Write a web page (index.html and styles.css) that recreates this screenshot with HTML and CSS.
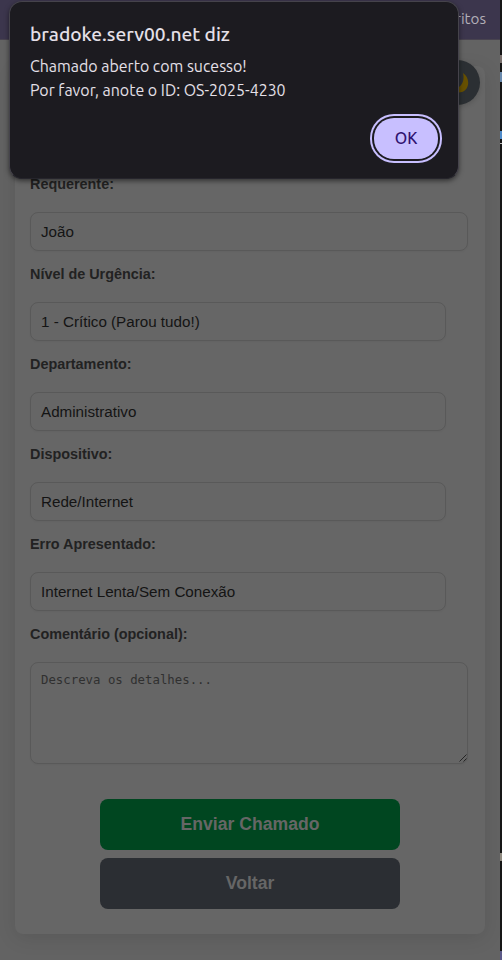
FILE: index.html
```html
<!DOCTYPE html>
<html lang="pt-BR">
<head>
<meta charset="utf-8">
<title>Abrir Chamado</title>
<link rel="stylesheet" href="styles.css">
</head>
<body>
<div class="window">
  <header class="bookmarks"><span class="bookmark">ritos</span></header>
  <main class="page">
    <form class="card">
      <label class="label">Requerente:</label>
      <div class="field wide">João</div>
      <label class="label">Nível de Urgência:</label>
      <div class="field">1 - Crítico (Parou tudo!)</div>
      <label class="label">Departamento:</label>
      <div class="field">Administrativo</div>
      <label class="label">Dispositivo:</label>
      <div class="field">Rede/Internet</div>
      <label class="label">Erro Apresentado:</label>
      <div class="field">Internet Lenta/Sem Conexão</div>
      <label class="label">Comentário (opcional):</label>
      <div class="comment">Descreva os detalhes...
        <svg class="grip" width="8" height="8" viewBox="0 0 8 8"><path d="M0.5 7.5L7.5 0.5M4.5 7.5L7.5 4.5"/></svg>
      </div>
      <div class="actions">
        <button type="button" class="button send">Enviar Chamado</button>
        <button type="button" class="button back">Voltar</button>
      </div>
    </form>
  </main>
  <div class="theme">
    <svg width="20" height="20" viewBox="0 0 20 20"><path d="M14 0C22 5 21 19.500 9.500 19.500C5 19.500 2 17.500 1 14.500C10 18 16.500 10 14 0Z"/></svg>
  </div>
  <section class="dialog">
    <h1 class="title">bradoke.serv00.net diz</h1>
    <p class="message">Chamado aberto com sucesso!<br>Por favor, anote o ID: OS-2025-4230</p>
    <button type="button" class="ok">OK</button>
  </section>
</div>
<aside class="behind"><i class="mark m1"></i><i class="mark m2"></i><i class="mark m3"></i><i class="mark m4"></i><i class="mark m5"></i><i class="mark m6"></i></aside>
</body>
</html>
```
FILE: styles.css
```css
* { box-sizing: border-box; }
body {
  margin: 0;
  width: 502px;
  height: 960px;
  display: flex;
  overflow: hidden;
  font-family: "Liberation Sans", Arial, sans-serif;
}
.window {
  position: relative;
  width: 500px;
  height: 960px;
  overflow: hidden;
  background: #636363;
}
.bookmarks {
  height: 40px;
  background: #3c364d;
  border-bottom: 1px solid #48434f;
  display: flex;
  justify-content: flex-end;
  padding: 7px 14px 0 0;
}
.bookmark {
  font: 15.2px/24px Ubuntu, "Noto Sans", sans-serif;
  color: #b3afb8;
}
.page { padding: 26px 15px; }
.card {
  height: 868px;
  padding: 108px 17px 0 15px;
  border-radius: 8px;
  background: #666;
  box-shadow: 0 4px 20px rgba(0, 0, 0, .1);
}
.label {
  display: block;
  height: 38px;
  font-size: 14.4px;
  font-weight: bold;
  line-height: 20px;
  color: #222;
}
.field {
  width: 416px;
  height: 39px;
  margin-bottom: 13px;
  padding: 0 10px;
  border: 1px solid #595959;
  border-radius: 8px;
  box-shadow: 0 1px 2px rgba(0, 0, 0, .04);
  font-size: 15.2px;
  line-height: 37px;
  color: #141414;
}
.wide { width: 438px; }
.comment {
  position: relative;
  width: 438px;
  height: 102px;
  padding: 10px;
  border: 1px solid #595959;
  border-radius: 8px;
  box-shadow: 0 1px 2px rgba(0, 0, 0, .04);
  font: 12.35px/15px "DejaVu Sans Mono", monospace;
  color: #303030;
}
.grip {
  position: absolute;
  right: 0;
  bottom: 1px;
  fill: none;
  stroke: #252525;
}
.actions {
  display: flex;
  flex-direction: column;
  align-items: center;
  gap: 8px;
  margin: 35px 0 0 2px;
}
.button {
  width: 300px;
  height: 51px;
  padding: 0;
  border: 0;
  border-radius: 8px;
  font: bold 17.6px/51px "Liberation Sans", Arial, sans-serif;
  color: #666;
}
.send { background: #004620; }
.back { background: #2b2e33; }
.theme {
  position: absolute;
  left: 435px;
  top: 60px;
  width: 45px;
  height: 45px;
  border-radius: 50%;
  background: #2b2f33;
  box-shadow: 0 2px 5px rgba(0, 0, 0, .15);
  display: flex;
  align-items: center;
  justify-content: center;
}
.theme svg { fill: #665000; margin-left: 2px; }
.dialog {
  position: absolute;
  left: 9px;
  top: 1px;
  width: 450px;
  height: 178px;
  padding: 20px;
  border: 1px solid #45434b;
  border-bottom-color: #26252c;
  border-radius: 13px;
  background: #1c1b20;
  box-shadow: 0 2px 5px rgba(0, 0, 0, .5);
  font-family: Ubuntu, "Noto Sans", sans-serif;
  color: #e5e0e8;
}
.title {
  margin: 0;
  font-size: 19.2px;
  font-weight: 500;
  line-height: 24px;
  white-space: nowrap;
}
.message {
  margin: 8px 0 0;
  font-size: 15.95px;
  line-height: 24px;
  white-space: nowrap;
}
.ok {
  position: absolute;
  right: 20px;
  bottom: 19px;
  width: 64px;
  height: 41px;
  border: 0;
  padding: 0;
  border-radius: 20px;
  background: #c8bfff;
  box-shadow: 0 0 0 2px #1c1b20, 0 0 0 4px #c8bfff;
  font: 500 16px/41px Ubuntu, "Noto Sans", sans-serif;
  color: #301271;
}
.behind {
  position: relative;
  width: 2px;
  height: 960px;
  background: #161616;
}
.mark { position: absolute; left: 0; width: 2px; }
.m1 { top: 55px; height: 8px; background: #79706d; }
.m2 { top: 72px; height: 10px; background: #6989ac; }
.m3 { top: 131px; height: 8px; background: #4f8bc9; }
.m4 { top: 143px; height: 1px; background: #bbb; }
.m5 { top: 853px; height: 8px; background: #8e897f; }
.m6 { top: 951px; height: 9px; background: #5c5a88; }
```
